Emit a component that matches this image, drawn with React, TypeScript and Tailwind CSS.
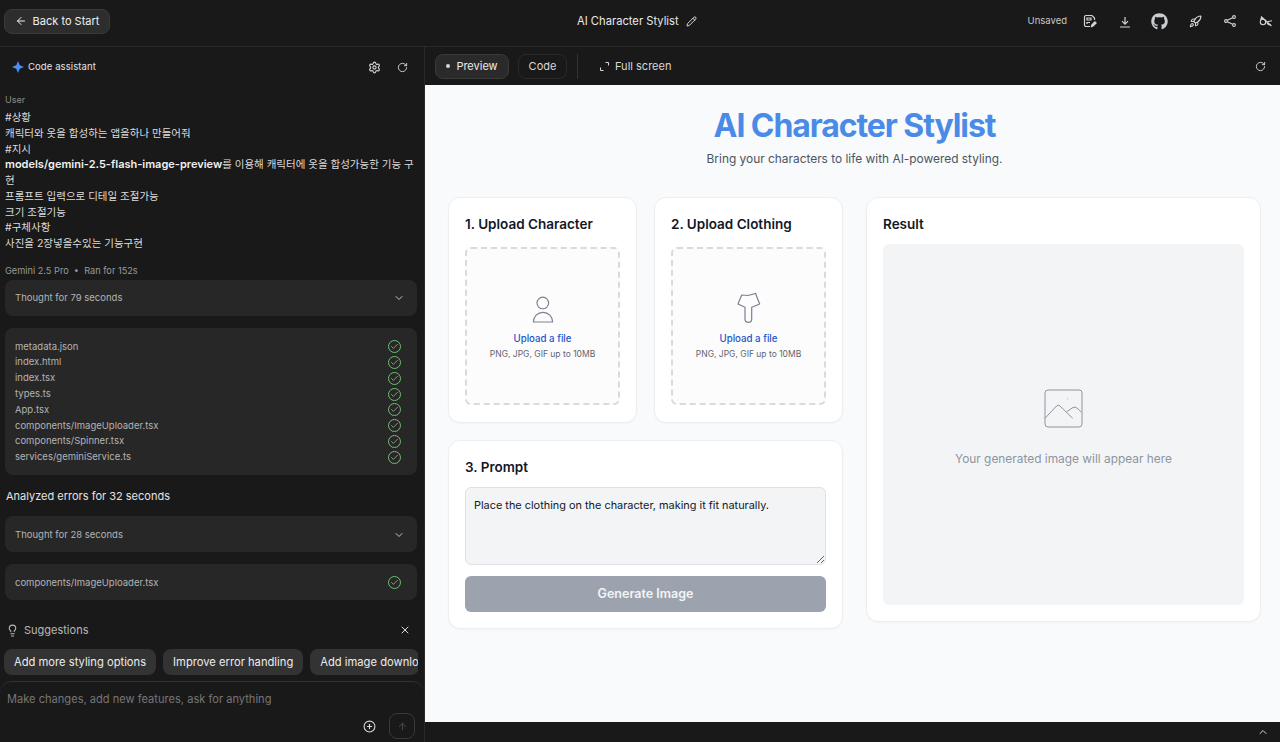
import React from 'react';
import {
  ArrowLeft,
  ArrowUp,
  Check,
  ChevronDown,
  ChevronUp,
  Lightbulb,
  Pencil,
  PlusCircle,
  Rocket,
  RotateCw,
  Settings,
  X,
} from 'lucide-react';
import { FaGithub } from 'react-icons/fa';

const files = [
  'metadata.json',
  'index.html',
  'index.tsx',
  'types.ts',
  'App.tsx',
  'components/ImageUploader.tsx',
  'components/Spinner.tsx',
  'services/geminiService.ts',
];

const DoneIcon = () => (
  <span className="flex h-[13px] w-[13px] items-center justify-center rounded-full border border-[#6cc070]">
    <Check size={9} strokeWidth={1.5} className="text-[#d5e8d5]" />
  </span>
);

const ThoughtRow = ({ label }: { label: string }) => (
  <div className="ml-[5px] mr-[7px] flex h-9 items-center justify-between rounded-lg bg-[#272727] pl-[10px] pr-3 pt-px text-[9.5px] text-[#b4b4b4]">
    <span>{label}</span>
    <ChevronDown size={12} className="text-[#c4c4c4]" />
  </div>
);

const Dropzone = ({ icon }: { icon: React.ReactNode }) => (
  <div className="flex h-[158px] flex-col items-center rounded-md border-2 border-dashed border-[#d8dade] bg-[#fcfcfd] pt-[44px]">
    <div className="h-[30px] w-[30px] text-[#7b8190]">{icon}</div>
    <span className="mt-[8px] text-[9.7px] font-medium leading-4 text-[#1f54c9]">Upload a file</span>
    <span className="text-[8.5px] leading-[14px] text-[#5e6470]">PNG, JPG, GIF up to 10MB</span>
  </div>
);

const App: React.FC = () => {
  return (
    <div className="flex h-[742px] w-[1280px] flex-col overflow-hidden bg-[#191919] font-['Inter','Noto_Sans_CJK_KR',sans-serif]">
      {/* Top bar */}
      <header className="relative flex h-[47px] shrink-0 items-center justify-between border-b border-[#2a2a2a] pb-[4px] pl-1 pr-[7px] text-[#e6e6e6]">
        <button className="flex h-[25px] w-[106px] items-center justify-center gap-[6px] rounded-lg border border-[#3a3a3a] bg-[#2d2d2d] text-[11px] text-[#f0f0f0]">
          <ArrowLeft size={12} />
          Back to Start
        </button>
        <div className="absolute left-[577px] top-[13px] flex items-center gap-[7px] text-[11.2px] leading-4 text-[#e8e8e8]">
          AI Character Stylist
          <Pencil size={11} />
        </div>
        <div className="flex items-center text-[#d4d4d4]">
          <span className="mr-[16px] mt-px text-[9.5px] text-[#c8c8c8]">Unsaved</span>
          <svg width="14" height="14" viewBox="0 0 14 14" fill="none" stroke="currentColor" strokeWidth="1.2" className="mr-[22px]">
            <path d="M7 12.500H3a1.500 1.500 0 0 1-1.500-1.500V3A1.500 1.500 0 0 1 3 1.500h6l2.500 2.500v2" />
            <path d="M4 4h4v2H4zM4 10V8.500h3" />
            <path d="M8.500 12.500l.4-1.700 3-3 1.200 1.200-3 3z" fill="currentColor" />
          </svg>
          <svg width="12" height="12" viewBox="0 0 12 12" fill="none" stroke="currentColor" strokeWidth="1.2" className="mr-[20px] mt-[2px]">
            <path d="M6 1v7M3 5.200l3 3 3-3M1 11h10" />
          </svg>
          <FaGithub size={17} className="mr-[21px] text-[#c9ccd1]" />
          <Rocket size={13} className="mr-[22px]" />
          <svg width="12" height="12" viewBox="0 0 12 12" fill="none" stroke="currentColor" strokeWidth="1.1" className="mr-[23px]">
            <circle cx="2" cy="6" r="1.400" />
            <circle cx="10" cy="2" r="1.400" />
            <circle cx="10" cy="10" r="1.400" />
            <path d="M3.300 5.300l5.400-2.600M3.300 6.700l5.400 2.600" />
          </svg>
          <svg width="14" height="12" viewBox="0 0 14 12" fill="none" stroke="currentColor" strokeWidth="1.1">
            <circle cx="4" cy="7" r="2.700" />
            <path d="M6.500 6.500l1.500.3 5-1M1.500 4.500L3 2M2 1.500l10.500 9.500M8 7.500a2.700 2.700 0 0 0 4 2" />
          </svg>
        </div>
      </header>

      <div className="flex min-h-0 flex-1">
        {/* Code assistant panel */}
        <aside className="flex w-[425px] shrink-0 flex-col overflow-hidden border-r border-[#2a2a2a] text-[#d8d8d8]">
          <div className="flex h-[38px] shrink-0 items-center justify-between pl-[12px] pr-[16px] pt-[2px]">
            <div className="flex items-center gap-[4px] text-[9.5px] tracking-[0.1px] text-[#e4e4e4]">
              <svg width="12" height="12" viewBox="0 0 24 24" fill="#4d8df5">
                <path d="M12 0L15.500 8.500L24 12L15.500 15.500L12 24L8.500 15.500L0 12L8.500 8.500z" />
              </svg>
              Code assistant
            </div>
            <div className="flex items-center gap-[16px]">
              <Settings size={13} className="text-[#d8d8d8]" />
              <RotateCw size={11} className="text-[#d8d8d8]" />
            </div>
          </div>

          <div className="pl-[5px] pr-[6px] pt-[8px]">
            <div className="text-[9px] leading-[14px] text-[#8e8e8e]">User</div>
            <div className="mt-[3px] text-[10.5px] leading-[15.75px] text-[#dcdcdc]">
              <p>#상황</p>
              <p>캐릭터와 옷을 합성하는 앱을하나 만들어줘</p>
              <p>#지시</p>
              <p>
                <strong className="text-[11px] font-semibold text-[#f0f0f0]">models/gemini-2.5-flash-image-preview</strong>를 이용해 캐릭터에 옷을 합성가능한 기능 구현
              </p>
              <p>프롬프트 입력으로 디테일 조절가능</p>
              <p>크기 조절기능</p>
              <p>#구체사항</p>
              <p>사진을 2장넣을수있는 기능구현</p>
            </div>
          </div>

          <div className="mt-[12px] px-[5px] text-[9.2px] leading-[14px] text-[#9a9a9a]">Gemini 2.5 Pro &nbsp;•&nbsp; Ran for 152s</div>
          <div className="mt-[2px]">
            <ThoughtRow label="Thought for 79 seconds" />
          </div>

          <div className="ml-[5px] mr-[7px] mt-[12px] rounded-lg bg-[#272727] pb-[10px] pl-[10px] pr-4 pt-[11px] text-[9.5px] text-[#b4b4b4]">
            {files.map((name) => (
              <div key={name} className="flex h-[15.8px] items-center justify-between">
                <span>{name}</span>
                <DoneIcon />
              </div>
            ))}
          </div>

          <div className="mt-[13px] px-[6px] text-[11px] leading-4 text-[#e4e4e4]">Analyzed errors for 32 seconds</div>
          <div className="mt-[12px]">
            <ThoughtRow label="Thought for 28 seconds" />
          </div>
          <div className="ml-[5px] mr-[7px] mt-[12px] flex h-9 items-center justify-between rounded-lg bg-[#272727] pl-[10px] pr-4 pt-px text-[9.5px] text-[#b4b4b4]">
            <span>components/ImageUploader.tsx</span>
            <DoneIcon />
          </div>

          <div className="mt-[22px] flex h-[16px] items-center justify-between pl-[6px] pr-[13px] text-[11px] text-[#b8b8b8]">
            <span className="flex items-center gap-[5px]">
              <Lightbulb size={13} />
              Suggestions
            </span>
            <X size={12} className="text-[#d8d8d8]" />
          </div>

          <div className="ml-1 mr-[6px] mt-[11px] flex shrink-0 gap-[7px] overflow-hidden text-[11.2px] text-[#ececec]">
            <span className="flex h-[26px] shrink-0 items-center rounded-lg bg-[#333333] px-[10px]">Add more styling options</span>
            <span className="flex h-[26px] shrink-0 items-center rounded-lg bg-[#333333] px-[10px]">Improve error handling</span>
            <span className="flex h-[26px] shrink-0 items-center rounded-lg bg-[#333333] pl-[10px]">Add image downlo</span>
          </div>

          <div className="mt-[6px] flex-1 rounded-t-xl border-t border-[#333333] pl-[7px] pr-[9px] pt-[9px]">
            <div className="text-[11.1px] leading-4 text-[#767676]">Make changes, add new features, ask for anything</div>
            <div className="mt-[6px] flex items-center justify-end gap-[13px]">
              <PlusCircle size={13} className="text-[#d8d8d8]" />
              <span className="flex h-[26px] w-[26px] items-center justify-center rounded-lg border border-[#3a3a3a]">
                <ArrowUp size={11} className="text-[#4e4e4e]" />
              </span>
            </div>
          </div>
        </aside>

        <div className="flex min-w-0 flex-1 flex-col">
          {/* Preview toolbar */}
          <div className="flex h-[38px] shrink-0 items-center pl-[10px] pr-[14px] text-[11px]">
            <span className="flex h-[25px] w-[74px] items-center justify-center gap-[6px] rounded-lg border border-[#3a3a3a] bg-[#2a2a2a] text-[#ececec]">
              <span className="h-[4px] w-[4px] rounded-full bg-[#d8d8d8]" />
              Preview
            </span>
            <span className="ml-[9px] flex h-[25px] w-[49px] items-center justify-center rounded-lg border border-[#2a2a2a] text-[#d8d8d8]">Code</span>
            <span className="ml-[10px] h-[25px] w-px bg-[#333333]" />
            <span className="ml-[22px] flex items-center gap-[6px] text-[#d8d8d8]">
              <svg width="9" height="9" viewBox="0 0 9 9" fill="none" stroke="#d8d8d8" strokeWidth="1">
                <path d="M5.500 0.500h3v3M0.500 5.500v3h3" />
              </svg>
              Full screen
            </span>
            <RotateCw size={11} className="ml-auto text-[#d8d8d8]" />
          </div>

          {/* App preview */}
          <main className="min-h-0 flex-1 bg-[#f9fafb] pl-[23px] pr-[19px]">
            <div className="pt-[21px] text-center">
              <h1 className="text-[32px] font-bold leading-10 tracking-[-1.08px] text-[#4a8be8]">AI Character Stylist</h1>
              <p className="mt-[3px] text-[11.9px] leading-5 text-[#4b5563]">Bring your characters to life with AI-powered styling.</p>
            </div>

            <div className="mt-[28px] flex items-start gap-[23px]">
              <div className="w-[395px] shrink-0">
                <div className="flex gap-[17px]">
                  <section className="h-[226px] flex-1 rounded-xl border border-[#eceef1] bg-white px-4 pt-4 shadow-[0_1px_2px_rgba(0,0,0,0.03)]">
                    <h2 className="mb-[13px] text-[13.5px] font-semibold leading-5 text-[#111827]">1. Upload Character</h2>
                    <Dropzone
                      icon={
                        <svg width="30" height="30" viewBox="0 0 31 31" fill="none" stroke="currentColor" strokeWidth="1.2" strokeLinejoin="round">
                          <circle cx="15.300" cy="10.300" r="6" />
                          <path d="M5.500 30a10 10 0 0 1 20 0z" />
                        </svg>
                      }
                    />
                  </section>
                  <section className="h-[226px] flex-1 rounded-xl border border-[#eceef1] bg-white px-4 pt-4 shadow-[0_1px_2px_rgba(0,0,0,0.03)]">
                    <h2 className="mb-[13px] text-[13.5px] font-semibold leading-5 text-[#111827]">2. Upload Clothing</h2>
                    <Dropzone
                      icon={
                        <svg width="30" height="30" viewBox="0 0 30 30" fill="none" stroke="currentColor" strokeWidth="1.2" strokeLinejoin="round">
                          <path d="M7.700 2L14 2.500L21.700 0.500L22.500 3L25.700 11L17.700 14.300V26Q17.700 29.300 14.500 29.300Q11 29.300 11 26V14.300L4 11z" />
                        </svg>
                      }
                    />
                  </section>
                </div>
                <section className="mt-[17px] h-[189px] rounded-xl border border-[#eceef1] bg-white px-4 pt-4 shadow-[0_1px_2px_rgba(0,0,0,0.03)]">
                  <h2 className="mb-[10px] text-[13.5px] font-semibold leading-5 text-[#111827]">3. Prompt</h2>
                  <textarea
                    readOnly
                    value="Place the clothing on the character, making it fit naturally."
                    className="block h-[78px] w-full rounded-md border border-[#dfe1e6] bg-[#f3f4f6] px-[8px] py-[9px] text-[10.9px] leading-[16px] text-[#111827] outline-none"
                  />
                  <button className="mt-[11px] h-9 w-full rounded-md bg-[#9ca3af] text-[12.5px] font-semibold text-[#f3f4f6]">Generate Image</button>
                </section>
              </div>

              <section className="h-[425px] flex-1 rounded-xl border border-[#eceef1] bg-white px-4 pt-4 shadow-[0_1px_2px_rgba(0,0,0,0.03)]">
                <h2 className="mb-[10px] text-[13.5px] font-semibold leading-5 text-[#111827]">Result</h2>
                <div className="flex h-[361px] flex-col items-center rounded-md bg-[#f3f4f6] pt-[145px]">
                  <svg width="40" height="40" viewBox="0 0 40 40" fill="none" stroke="#8f94a1" strokeWidth="1">
                    <rect x="1" y="1" width="37" height="37" rx="3" />
                    <path d="M1 29.300L12.500 17Q14.300 15.500 16 17L28.700 29.300M22.700 22.700L29 18.500Q31 17.500 33 19L37.500 23.300" />
                    <path d="M23 10h.6" />
                  </svg>
                  <span className="mt-[20px] text-[11.9px] leading-5 text-[#8e94a1]">Your generated image will appear here</span>
                </div>
              </section>
            </div>
          </main>

          {/* Bottom strip */}
          <div className="flex h-5 shrink-0 items-center justify-end pr-[11px]">
            <ChevronUp size={12} className="text-[#d8d8d8]" />
          </div>
        </div>
      </div>
    </div>
  );
};

export default App;
